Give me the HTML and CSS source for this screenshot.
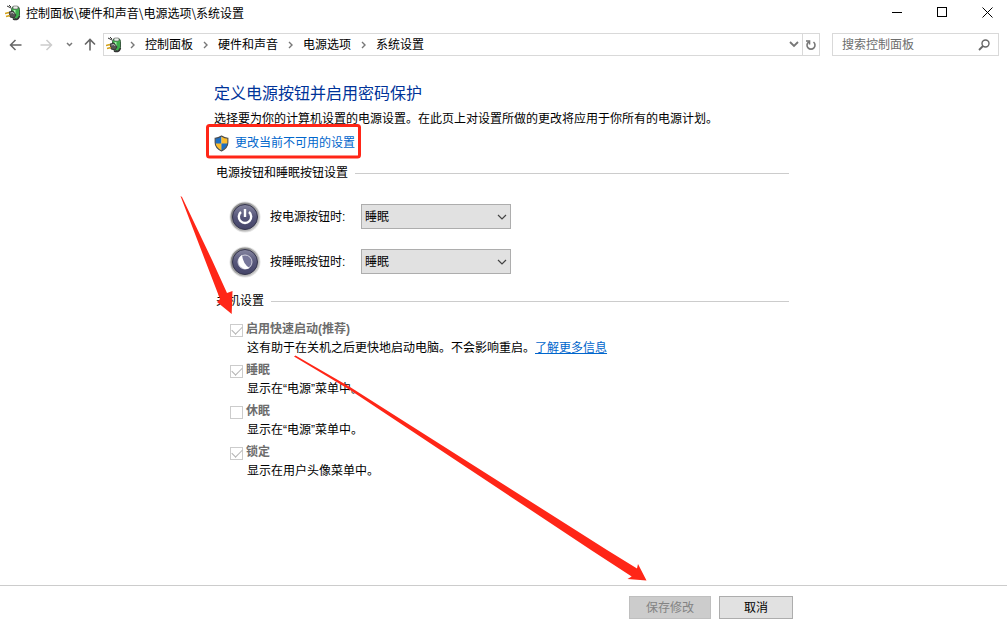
FILE: index.html
```
<!DOCTYPE html>
<html lang="zh-CN">
<head>
  <meta charset="UTF-8" />
  <title>系统设置</title>
  <link rel="stylesheet" href="styles.css">
</head>
<body>
  <svg class="defs" aria-hidden="true">
    <defs>
      <symbol id="plug" viewBox="0 0 16 16">
        <path d="M6 3 L2 1 M6 2 L4 0" fill="none" stroke="#333" stroke-width="1"/>
        <rect x="6.500" y="1.500" width="8" height="12" rx="3" fill="#3fae4c" stroke="#3a5a40"/>
        <rect x="8" y="1" width="5" height="3" rx="1" fill="#e8f0e8" stroke="#555" stroke-width=".6"/>
        <path d="M8.500 5 h2 v5 h-2z" fill="#a5f0a8"/>
        <path d="M4 7 L8 6 L11 10 L9 13 L5 12z" fill="#555" stroke="#2b2b2b" stroke-width=".8"/>
        <path d="M5.500 8 L8 7.500 L9 9" fill="none" stroke="#bbb"/>
        <path d="M0 8.500 L4 7.500 M1 11.500 L5 10.500" stroke="#d3a21a" stroke-width="1.600"/>
        <path d="M8 14 Q13 16 14.500 11" fill="none" stroke="#333" stroke-width="1.500"/>
      </symbol>
      <symbol id="crumb" viewBox="0 0 5 8">
        <path d="M1 1 L4 4 L1 7" fill="none" stroke="#777" stroke-width="1.4"/>
      </symbol>
      <symbol id="down" viewBox="0 0 10 6">
        <path d="M1 1 L5 5 L9 1" fill="none" stroke="currentColor" stroke-width="1.2"/>
      </symbol>
      <linearGradient id="ring" x1="0" y1="0" x2="1" y2="1">
        <stop offset="0" stop-color="#777"/>
        <stop offset="1" stop-color="#d4d4d4"/>
      </linearGradient>
      <linearGradient id="orb" x1="0" y1="0" x2="0" y2="1">
        <stop offset="0" stop-color="#8686a0"/>
        <stop offset=".5" stop-color="#56567a"/>
        <stop offset="1" stop-color="#444468"/>
      </linearGradient>
    </defs>
  </svg>

  <header class="titlebar">
    <svg class="app-icon"><use href="#plug"/></svg>
    <span class="window-title">控制面板\硬件和声音\电源选项\系统设置</span>
    <button class="win-btn" aria-label="最小化"><svg width="11" height="11"><path d="M0 5.500H10" stroke="#000"/></svg></button>
    <button class="win-btn" aria-label="最大化"><svg width="11" height="11"><rect x=".5" y=".5" width="9" height="9" fill="none" stroke="#000"/></svg></button>
    <button class="win-btn" aria-label="关闭"><svg width="11" height="11"><path d="M.5 .5L10.500 10.500M10.500 .5L.5 10.500" stroke="#000"/></svg></button>
  </header>

  <nav class="navbar">
    <button class="nav-btn back" aria-label="后退"><svg width="13" height="12"><path d="M12.500 6H1.500M6.500 1L1.500 6L6.500 11" fill="none" stroke="#666" stroke-width="1.500"/></svg></button>
    <button class="nav-btn forward" aria-label="前进"><svg width="13" height="12"><path d="M.5 6H11.500M6.500 1L11.500 6L6.500 11" fill="none" stroke="#ccc" stroke-width="1.500"/></svg></button>
    <button class="nav-btn recent" aria-label="最近的位置"><svg width="7" height="5"><path d="M1 1L3.500 3.500L6 1" fill="none" stroke="#777" stroke-width="1.500"/></svg></button>
    <button class="nav-btn up" aria-label="向上"><svg width="12" height="13"><path d="M6 12.500V1.500M1 6.500L6 1.500L11 6.500" fill="none" stroke="#666" stroke-width="1.600"/></svg></button>
    <div class="address">
      <svg class="app-icon"><use href="#plug"/></svg>
      <svg class="sep"><use href="#crumb"/></svg>
      <a href="#">控制面板</a>
      <svg class="sep"><use href="#crumb"/></svg>
      <a href="#">硬件和声音</a>
      <svg class="sep"><use href="#crumb"/></svg>
      <a href="#">电源选项</a>
      <svg class="sep"><use href="#crumb"/></svg>
      <a href="#">系统设置</a>
      <button class="drop" aria-label="以前的位置"><svg width="10" height="7"><path d="M1 1L5 5L9 1" fill="none" stroke="#777" stroke-width="1.800"/></svg></button>
      <button class="refresh" aria-label="刷新"><svg width="12" height="12"><path d="M3.500 3A4 4 0 1 0 8.500 3M1 2H4.500V5.500" fill="none" stroke="#777" stroke-width="1.600"/></svg></button>
    </div>
    <div class="search">
      <input type="text" placeholder="搜索控制面板" aria-label="搜索控制面板">
      <svg width="12" height="12"><circle cx="7.500" cy="4.500" r="3.500" fill="none" stroke="#666" stroke-width="1.400"/><path d="M5 7L1 11" stroke="#666" stroke-width="1.800"/></svg>
    </div>
  </nav>

  <main class="content">
    <h1>定义电源按钮并启用密码保护</h1>
    <p class="intro">选择要为你的计算机设置的电源设置。在此页上对设置所做的更改将应用于你所有的电源计划。</p>
    <a class="admin-link" href="#">
      <svg class="shield" viewBox="0 0 14 16">
        <path d="M7 1 Q4 3 1 3 V7 Q1 12 7 15z" fill="#1d6fc4"/>
        <path d="M7 1 Q10 3 13 3 V7 Q13 12 7 15z" fill="#fdbd2c"/>
        <path d="M1 8 H7 V15 Q2 12 1 8z" fill="#fdbd2c"/>
        <path d="M13 8 H7 V15 Q12 12 13 8z" fill="#1d6fc4"/>
        <path d="M7 1 Q4 3 1 3 V7 Q1 12 7 15 Q13 12 13 7 V3 Q10 3 7 1z" fill="none" stroke="#4b4b4b"/>
      </svg>
      更改当前不可用的设置
    </a>

    <section class="group buttons-group">
      <h2>电源按钮和睡眠按钮设置</h2>
      <div class="row">
        <svg class="orb" viewBox="0 0 32 32">
          <circle cx="16" cy="16" r="15.500" fill="#e2e2e2"/>
          <circle cx="16" cy="16" r="14.500" fill="url(#ring)"/>
          <circle cx="16" cy="16" r="12.500" fill="url(#orb)" stroke="#34344c"/>
          <path d="M12 11A6.200 6.200 0 1 0 20 11" fill="none" stroke="#fff" stroke-width="2.400"/>
          <path d="M16 8V16" stroke="#fff" stroke-width="2.400"/>
        </svg>
        <label for="powerButton">按电源按钮时:</label>
        <span class="select">
          <select id="powerButton"><option>睡眠</option></select>
          <svg><use href="#down"/></svg>
        </span>
      </div>
      <div class="row">
        <svg class="orb" viewBox="0 0 32 32">
          <circle cx="16" cy="16" r="15.500" fill="#e2e2e2"/>
          <circle cx="16" cy="16" r="14.500" fill="url(#ring)"/>
          <circle cx="16" cy="16" r="12.500" fill="url(#orb)" stroke="#34344c"/>
          <circle cx="16" cy="16" r="7" fill="#77779a" stroke="#d4d4e0"/>
          <path d="M13 9A7.500 7.500 0 1 0 20.500 22Q14 18 13 9z" fill="#fff"/>
        </svg>
        <label for="sleepButton">按睡眠按钮时:</label>
        <span class="select">
          <select id="sleepButton"><option>睡眠</option></select>
          <svg><use href="#down"/></svg>
        </span>
      </div>
    </section>

    <section class="group">
      <h2>关机设置</h2>
      <div class="option">
        <input type="checkbox" id="fastStartup" checked disabled>
        <label for="fastStartup">启用快速启动(推荐)</label>
        <p>这有助于在关机之后更快地启动电脑。不会影响重启。<a href="#">了解更多信息</a></p>
      </div>
      <div class="option">
        <input type="checkbox" id="sleep" checked disabled>
        <label for="sleep">睡眠</label>
        <p>显示在“电源”菜单中。</p>
      </div>
      <div class="option">
        <input type="checkbox" id="hibernate" disabled>
        <label for="hibernate">休眠</label>
        <p>显示在“电源”菜单中。</p>
      </div>
      <div class="option">
        <input type="checkbox" id="lock" checked disabled>
        <label for="lock">锁定</label>
        <p>显示在用户头像菜单中。</p>
      </div>
    </section>

    <!-- red callouts -->
    <svg class="marks" viewBox="174 116 480 470" aria-hidden="true">
      <rect x="207.500" y="125.500" width="152" height="31.500" rx="2" fill="none" stroke="#ff2617" stroke-width="3"/>
      <path d="M180.500 196L182 197L212 260L227 293L232.500 291L231.700 314L217 302L220 299L205 260z" fill="#ff2617"/>
      <path d="M294 356.500L295.500 355.500L350 387L607 550L637 568.500L638 564L646.500 580.500L627.500 579L631.700 576.500L592.500 551L350 390z" fill="#ff2617"/>
    </svg>
  </main>

  <footer class="footer">
    <div class="actions">
      <button class="save" disabled>保存修改</button>
      <button class="cancel">取消</button>
    </div>
  </footer>
</body>
</html>
```
FILE: styles.css
```
* {
  box-sizing: border-box;
}
body {
  margin: 0;
  min-height: 100vh;
  display: flex;
  flex-direction: column;
  background: #fff;
  color: #000;
  font: 12px/18px "Liberation Sans", "Noto Sans CJK SC", sans-serif;
}
button, input, select {
  font: inherit;
  color: inherit;
}
svg {
  display: block;
  flex: none;
}
h1, h2, p {
  margin: 0;
  font-weight: normal;
}
.defs {
  position: absolute;
  width: 0;
  height: 0;
}
.app-icon {
  width: 16px;
  height: 16px;
}

/* title bar */
.titlebar {
  display: flex;
  align-items: center;
  height: 25px;
  padding-left: 5px;
}
.window-title {
  flex: 1;
  margin-left: 5px;
  font-family: "Noto Sans CJK SC", sans-serif;
}
.win-btn {
  display: flex;
  align-items: center;
  justify-content: center;
  width: 45px;
  height: 25px;
  padding: 0;
  border: 0;
  background: none;
}
.win-btn:last-child {
  width: 42px;
  padding-left: 3px;
}

/* navigation */
.navbar {
  display: flex;
  align-items: center;
  margin-top: 8px;
  padding: 0 8px 0 9px;
}
.nav-btn {
  padding: 0;
  border: 0;
  background: none;
}
.forward {
  margin-left: 18px;
}
.recent {
  margin-left: 13px;
}
.up {
  margin: 0 7px 0 11px;
}
.address, .search {
  display: flex;
  align-items: center;
  height: 23px;
  border: 1px solid #d9d9d9;
}
.address {
  flex: 1;
  padding-left: 2px;
}
.address a {
  color: #000;
  text-decoration: none;
}
.sep {
  width: 5px;
  height: 8px;
  margin: 0 10px;
}
.app-icon + .sep {
  margin-left: 8px;
}
.drop, .refresh {
  display: flex;
  align-items: center;
  justify-content: center;
  width: 17px;
  height: 21px;
  padding: 0;
  border: 0;
  background: none;
}
.drop {
  margin-left: auto;
}
.refresh {
  border-left: 1px solid #d9d9d9;
}
.search {
  width: 167px;
  margin-left: 12px;
  padding: 0 8px 0 9px;
}
.search input {
  flex: 1;
  min-width: 0;
  padding: 0;
  border: 0;
  outline: 0;
  background: none;
}
.search input::placeholder {
  color: #6d6d6d;
}

/* page */
.content {
  position: relative;
  flex: 1;
  width: 100%;
  max-width: 579px;
  margin: 0 auto;
  padding: 26px 4px 0 0;
}
h1 {
  font-size: 16px;
  line-height: 24px;
  color: #003399;
}
.intro {
  margin-top: 4px;
}
.admin-link {
  display: flex;
  align-items: center;
  gap: 6px;
  margin-top: 6px;
  color: #0066cc;
  text-decoration: none;
}
.shield {
  width: 15px;
  height: 17px;
}
.group {
  margin: 12px 0 0 2px;
}
.group h2 {
  display: flex;
  align-items: center;
  gap: 7px;
  font-size: 12px;
  line-height: 18px;
}
.group h2::after {
  content: "";
  flex: 1;
  border-top: 1px solid #ccc;
}
.row {
  display: flex;
  align-items: center;
  height: 45px;
  padding-left: 13px;
}
h2 + .row {
  margin-top: 12px;
}
.orb {
  width: 32px;
  height: 32px;
}
.row label {
  width: 91px;
  margin-left: 9px;
}
.select {
  position: relative;
  width: 150px;
}
.select select {
  display: block;
  width: 100%;
  height: 25px;
  padding: 0 3px;
  border: 1px solid #adadad;
  border-radius: 0;
  background: #e1e1e1;
  appearance: none;
}
.select svg {
  position: absolute;
  right: 4px;
  top: 10px;
  width: 10px;
  height: 6px;
  color: #444;
  pointer-events: none;
}
.buttons-group + .group {
  margin-top: 8px;
}

/* shutdown options */
.option {
  display: grid;
  grid-template-columns: 13px 1fr;
  column-gap: 3px;
  align-items: center;
  margin: 0 0 4px 14px;
}
h2 + .option {
  margin-top: 10px;
}
.option input {
  position: relative;
  width: 13px;
  height: 13px;
  margin: 2px 0 0;
  border: 1px solid #ccc;
  background: #fff;
  appearance: none;
}
.option input:checked::before {
  content: "";
  position: absolute;
  left: 3px;
  top: -1px;
  width: 5px;
  height: 9px;
  border: solid #b4b4b4;
  border-width: 0 1px 1px 0;
  transform: rotate(45deg);
}
.option label {
  color: #6d6d6d;
  font-weight: bold;
}
.option p {
  grid-column: 2;
  margin: 1px 0 0 1px;
}
.option a {
  color: #0066cc;
}
.marks {
  position: absolute;
  left: -40px;
  top: 60px;
  width: 480px;
  height: 470px;
  pointer-events: none;
}

/* bottom bar */
.footer {
  padding: 10px 0 7px;
  border-top: 1px solid #ccc;
}
.actions {
  display: flex;
  justify-content: flex-end;
  gap: 8px;
  width: 100%;
  max-width: 579px;
  margin: 0 auto;
}
.actions button {
  height: 23px;
  padding: 0;
  border: 1px solid #adadad;
  background: #e1e1e1;
}
.actions .save {
  width: 82px;
  border-color: #bfbfbf;
  background: #ccc;
  color: #838383;
}
.actions .cancel {
  width: 74px;
}
```
